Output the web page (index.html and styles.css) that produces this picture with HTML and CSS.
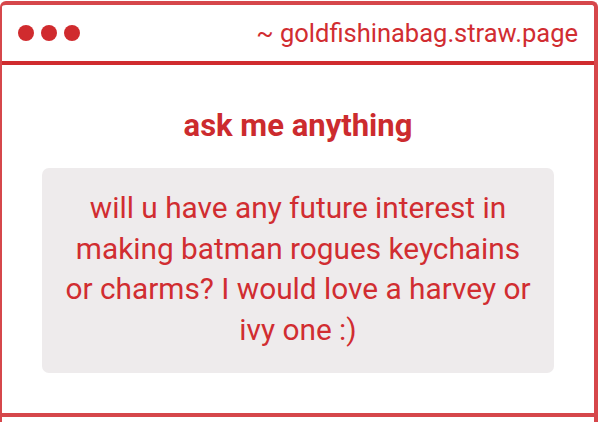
FILE: index.html
```html
<!DOCTYPE html>
<html lang="en">
<head>
    <meta charset="UTF-8">
    <meta name="viewport" content="width=device-width, initial-scale=1.0">
    <title>ask me anything</title>
    <link rel="stylesheet" href="styles.css">
</head>
<body>
    <div class="window">
        <div class="titlebar">
            <div class="dots">
                <span class="dot"></span>
                <span class="dot"></span>
                <span class="dot"></span>
            </div>
            <div class="address">~ goldfishinabag.straw.page</div>
        </div>

        <div class="content">
            <h2 class="heading">ask me anything</h2>
            <div class="question">
                will u have any future interest in making batman rogues keychains or charms? I would love a harvey or ivy one :)
            </div>
        </div>

        <div class="footer"></div>
    </div>
</body>
</html>
```

FILE: styles.css
```css
body {
    margin: 0;
    background-color: #fff;
    font-family: Roboto, "Liberation Sans", Arial, sans-serif;
    color: #d12d31;
}
.window {
    margin-top: 1px;
    border: 4px solid #d6474b;
    border-left-width: 2px;
    border-bottom: none;
    border-radius: 6px 6px 0 0;
    height: 417px;
    overflow: hidden;
}
.titlebar {
    display: flex;
    align-items: center;
    justify-content: space-between;
    height: 56px;
    padding: 0 16px;
    border-bottom: 4px solid #d02b2e;
}
.dots {
    display: flex;
    gap: 7px;
}
.dot {
    width: 16px;
    height: 16px;
    border-radius: 50%;
    background-color: #d02b2e;
}
.address {
    font-size: 25.5px;
    color: #d12d31;
}
.content {
    padding: 43px 40px 40px;
}
.heading {
    margin: 0 0 24px;
    font-size: 31px;
    line-height: 36px;
    font-weight: 700;
    text-align: center;
    color: #cc2b2e;
}
.question {
    background-color: #eeebec;
    border-radius: 7px;
    padding: 20px 22px 23px;
    font-size: 29.8px;
    line-height: 40.5px;
    text-align: center;
}
.footer {
    border-top: 4px solid #d6474b;
}
```
